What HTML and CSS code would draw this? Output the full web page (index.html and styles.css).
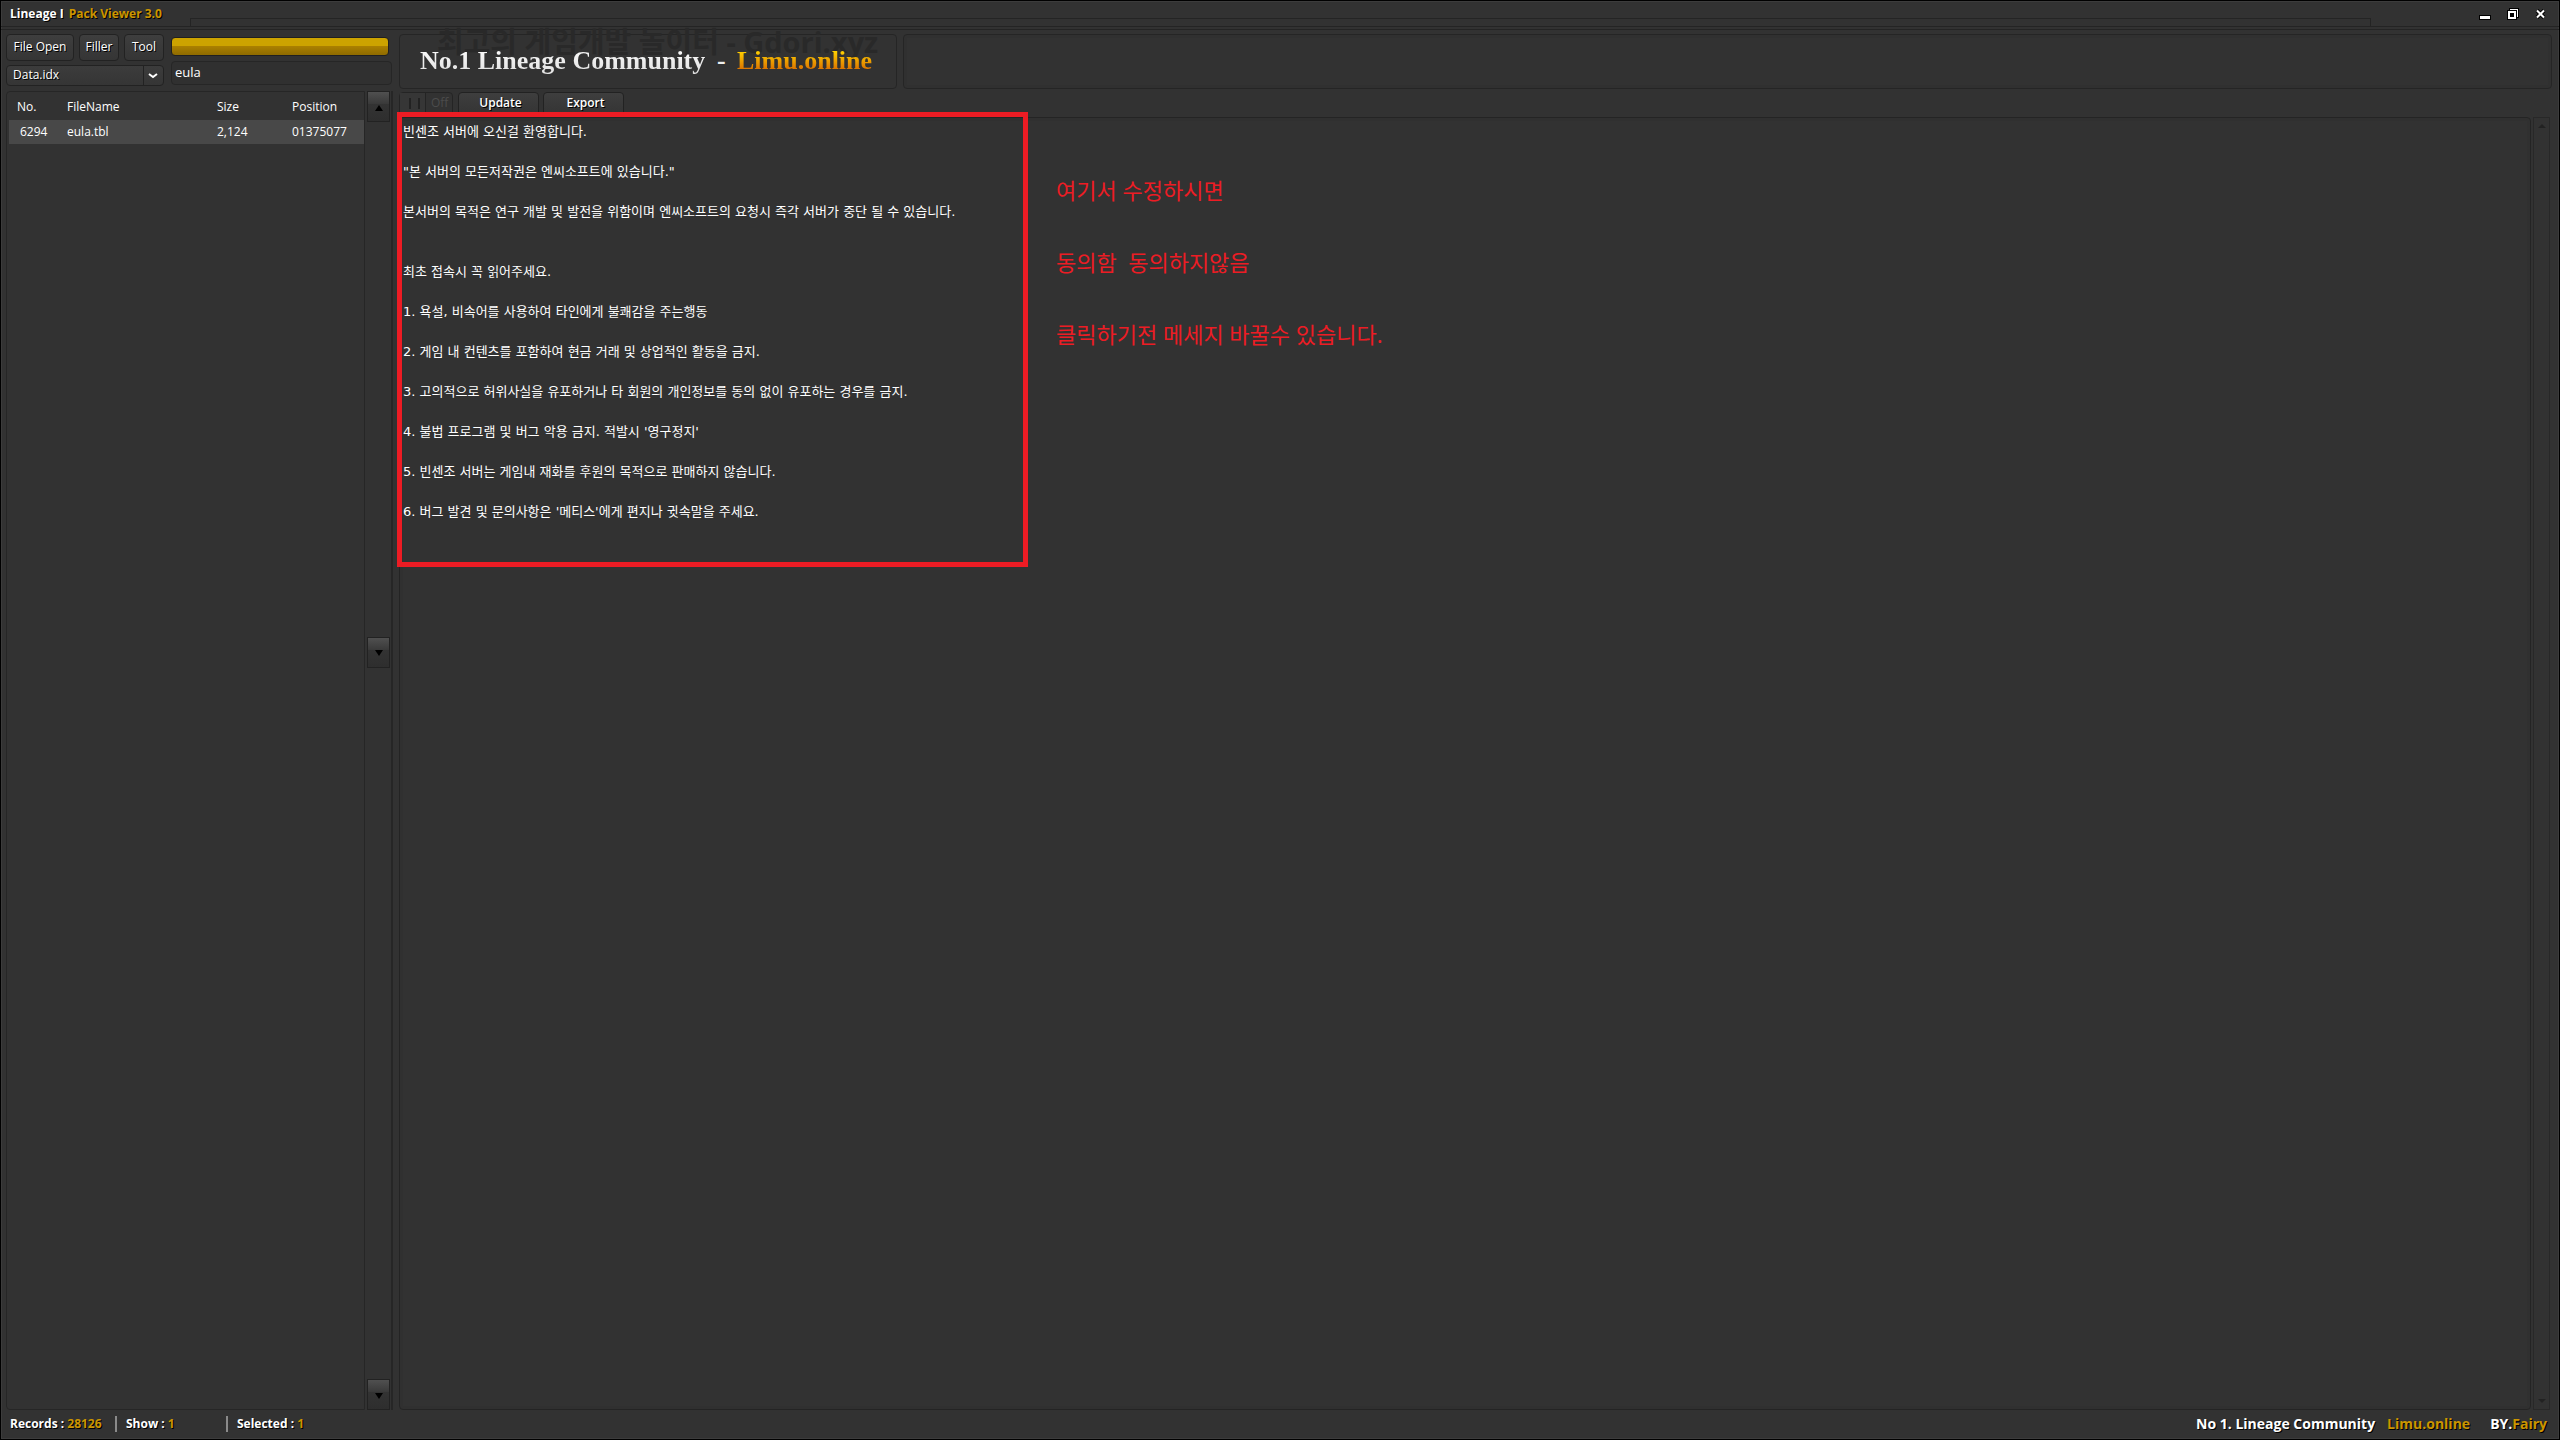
FILE: index.html
```html
<!DOCTYPE html>
<html lang="ko">
<head>
<meta charset="utf-8">
<title>Lineage I Pack Viewer 3.0</title>
<link rel="stylesheet" href="styles.css">
</head>
<body>
<div class="window">
  <header class="titlebar">
    <h1 class="title">Lineage I <span class="gold product">Pack Viewer 3.0</span></h1>
    <div class="title-groove"></div>
    <div class="window-controls">
      <button class="control" aria-label="Minimize"><svg width="12" height="12" viewBox="0 0 12 12"><path d="M0 7h12v5H0z" fill="#000"/><path d="M1 8h10v3H1z" fill="#fff"/></svg></button>
      <button class="control" aria-label="Restore"><svg width="12" height="12" viewBox="0 0 12 12"><path d="M2 0h10v10h-2v2H0V2h2z" fill="#000"/><path d="M3 1h8v8h-1V2H3z" fill="#fff"/><path d="M2 4h6v6H2z" fill="none" stroke="#fff" stroke-width="2"/></svg></button>
      <button class="control" aria-label="Close"><svg width="12" height="12" viewBox="0 0 12 12"><path d="M2 2.500l7 7M9 2.500l-7 7" stroke="#000" stroke-width="4"/><path d="M2 2.500l7 7M9 2.500l-7 7" stroke="#fff" stroke-width="2"/></svg></button>
    </div>
  </header>

  <main class="workspace">
    <aside class="sidebar">
      <div class="tools">
        <div class="tool-left">
          <div class="buttons">
            <button class="btn btn-open">File Open</button>
            <button class="btn">Filler</button>
            <button class="btn">Tool</button>
          </div>
          <div class="select-wrap">
            <select class="select" aria-label="Index file"><option>Data.idx</option></select>
            <svg class="chevron" width="10" height="6" viewBox="0 0 10 6"><path d="M1 1l4 3 4-3" fill="none" stroke="#fff" stroke-width="2"/></svg>
          </div>
        </div>
        <div class="tool-right">
          <div class="progress" role="progressbar" aria-label="Progress" aria-valuenow="100"></div>
          <input class="search" type="text" aria-label="Search" value="eula">
        </div>
      </div>
      <div class="list">
        <div class="list-body">
          <table class="files">
            <thead><tr><th class="c-no">No.</th><th class="c-name">FileName</th><th class="c-size">Size</th><th>Position</th></tr></thead>
            <tbody><tr><td class="num">6294</td><td>eula.tbl</td><td>2,124</td><td>01375077</td></tr></tbody>
          </table>
        </div>
        <div class="scroll">
          <button class="arrow" aria-label="Scroll up"><svg width="8" height="6" viewBox="0 0 8 6"><path d="M0 6l4-6 4 6z"/></svg></button>
          <div class="track-above"></div>
          <button class="arrow" aria-label="Scroll thumb"><svg width="8" height="6" viewBox="0 0 8 6"><path d="M0 0l4 6 4-6z"/></svg></button>
          <div class="track-below"></div>
          <button class="arrow" aria-label="Scroll down"><svg width="8" height="6" viewBox="0 0 8 6"><path d="M0 0l4 6 4-6z"/></svg></button>
        </div>
      </div>
    </aside>

    <section class="content">
      <div class="banners">
        <div class="banner">
          <div class="ghost">최고의 게임개발 놀이터 - Gdori.xyz</div>
          <span class="banner-main">No.1 Lineage Community</span>
          <span class="banner-dash">-</span>
          <span class="banner-link">Limu.online</span>
        </div>
        <div class="banner-empty"></div>
      </div>
      <div class="tabs">
        <label class="toggle"><input type="checkbox" class="toggle-input" disabled><span class="knob"></span><span class="off">Off</span></label>
        <button class="tab">Update</button>
        <button class="tab">Export</button>
      </div>
      <div class="editor-row">
        <div class="editor">
          <textarea class="text" aria-label="eula.tbl" spellcheck="false">빈센조 서버에 오신걸 환영합니다.

"본 서버의 모든저작권은 엔씨소프트에 있습니다."

본서버의 목적은 연구 개발 및 발전을 위함이며 엔씨소프트의 요청시 즉각 서버가 중단 될 수 있습니다.


최초 접속시 꼭 읽어주세요.

1. 욕설, 비속어를 사용하여 타인에게 불쾌감을 주는행동

2. 게임 내 컨텐츠를 포함하여 현금 거래 및 상업적인 활동을 금지.

3. 고의적으로 허위사실을 유포하거나 타 회원의 개인정보를 동의 없이 유포하는 경우를 금지.

4. 불법 프로그램 및 버그 악용 금지. 적발시 '영구정지'

5. 빈센조 서버는 게임내 재화를 후원의 목적으로 판매하지 않습니다.

6. 버그 발견 및 문의사항은 '메티스'에게 편지나 귓속말을 주세요.</textarea>
          <div class="highlight"></div>
          <div class="notes"><p>여기서 수정하시면</p><p>동의함&nbsp; 동의하지않음</p><p>클릭하기전 메세지 바꿀수 있습니다.</p></div>
        </div>
        <div class="rail">
          <svg width="8" height="4" viewBox="0 0 8 4"><path d="M0 4l4-4 4 4z"/></svg>
          <svg width="8" height="4" viewBox="0 0 8 4"><path d="M0 0l4 4 4-4z"/></svg>
        </div>
      </div>
    </section>
  </main>

  <footer class="status">
    <span class="stat stat-a">Records : <span class="gold">28126</span></span>
    <span class="stat stat-b">Show : <span class="gold">1</span></span>
    <span class="stat">Selected : <span class="gold">1</span></span>
    <div class="credits"><span>No 1. Lineage Community</span><a class="gold" href="#">Limu.online</a><span class="by">BY.<span class="gold">Fairy</span></span></div>
  </footer>
</div>
</body>
</html>
```
FILE: styles.css
```css
* { box-sizing: border-box; }

body {
  margin: 0;
  background: #323232;
  color: #fff;
  font: 12px/16px "Open Sans", "Noto Sans CJK KR", sans-serif;
}

button, input, select, textarea { font: inherit; color: inherit; margin: 0; }

.window {
  display: flex;
  flex-direction: column;
  min-height: 100vh;
  border: 1px solid #000;
  box-shadow: inset 0 0 0 1px #3c3c3c;
}

.gold { color: #cb9500; text-decoration: none; }

.titlebar {
  display: flex;
  height: 29px;
  padding-left: 9px;
  border-bottom: 4px double #242424;
}

.title {
  margin: 0;
  width: 180px;
  padding-top: 5px;
  font-size: 12px;
  line-height: 16px;
  text-shadow: 1px 1px 0 #000;
}
.product { margin-left: 2px; }

.title-groove {
  flex: 1;
  margin-top: 17px;
  border: solid #242424;
  border-width: 1px 1px 0;
}

.window-controls { display: flex; gap: 16px; padding: 7px 12px 0 108px; }
.control { width: 12px; height: 12px; padding: 0; border: 0; background: none; }
.control svg { display: block; }

.workspace { flex: 1; display: flex; padding: 4px 7px 0 5px; }

.sidebar { display: flex; flex-direction: column; width: 387px; margin-right: 6px; }

.tools { display: flex; gap: 7px; height: 51px; }
.tool-left { width: 158px; }
.buttons { display: flex; gap: 5px; margin-bottom: 4px; }

.btn {
  width: 40px;
  height: 27px;
  padding: 0 0 2px;
  border: 1px solid #222;
  border-radius: 4px;
  background: linear-gradient(#3e3e3e, #353535);
  text-shadow: 1px 1px 0 #000;
}
.btn-open { width: 68px; }

.select-wrap { display: grid; align-items: center; }
.select {
  grid-area: 1 / 1;
  width: 158px;
  height: 21px;
  padding: 0 6px 1px;
  appearance: none;
  border: 1px solid #222;
  border-radius: 4px;
  background: linear-gradient(90deg, transparent 136px, #222 136px, #222 137px, transparent 137px), linear-gradient(#3c3c3c, #353535);
  text-shadow: 1px 1px 0 #000;
}
.chevron { grid-area: 1 / 1; justify-self: end; margin-right: 6px; pointer-events: none; }

.tool-right { flex: 1; display: flex; flex-direction: column; gap: 5px; padding-top: 3px; }
.progress {
  width: 218px;
  height: 19px;
  border: 1px solid #202020;
  border-radius: 4px;
  background: linear-gradient(#cca300 0 50%, #a97f00 50%, #8f6b00);
}
.search {
  width: 221px;
  height: 25px;
  padding: 0 3px 2px;
  border: 1px solid #262626;
  border-radius: 4px;
  background: #303030;
  font-size: 13px;
}

.list { flex: 1; display: flex; margin-top: 6px; border-right: 2px solid #262626; }
.list-body {
  flex: 1;
  padding: 1px 0 0 2px;
  border: 1px solid #262626;
  border-radius: 4px 0 0 4px;
}
.files { width: 100%; border-collapse: collapse; table-layout: fixed; }
.files th { height: 27px; padding: 1px 0 0; font-weight: 400; text-align: left; }
.files th.c-no { padding-left: 8px; }
.files td { height: 24px; padding: 0; background: #484848; }
.files td.num { padding-left: 11px; }
.c-no { width: 58px; }
.c-name { width: 150px; }
.c-size { width: 75px; }

.scroll { display: flex; flex-direction: column; width: 26px; padding: 0 1px 0 2px; }
.track-above { flex: 42; }
.track-below { flex: 58; }
.arrow {
  width: 23px;
  height: 31px;
  padding: 0;
  border: 1px solid #222;
  background: linear-gradient(#505050, #3a3a3a 40%, #333 40%, #2e2e2e);
}

.content { flex: 1; display: flex; flex-direction: column; min-width: 0; }

.banners { display: flex; gap: 6px; height: 55px; }
.banner, .banner-empty { border: 1px solid #252525; border-radius: 4px; }
.banner {
  position: relative;
  display: flex;
  align-items: center;
  width: 498px;
  padding: 0 20px 2px;
  font: 700 26px/32px "Liberation Serif", serif;
  white-space: nowrap;
}
.banner-empty { flex: 1; box-shadow: inset 0 0 0 3px #303030; }
.ghost {
  position: absolute;
  left: 37px;
  top: -9px;
  color: #292929;
  font: 700 29px/32px "Open Sans", "Noto Sans CJK KR", sans-serif;
}
.banner-main, .banner-link { position: relative; color: transparent; background-clip: text; }
.banner-main { width: 297px; background-image: linear-gradient(#fff, #ddd); }
.banner-dash { position: relative; width: 20px; color: #eee; }
.banner-link { background-image: linear-gradient(#ffd000 20%, #d96d00 80%); }

.tabs { display: flex; gap: 4px; padding-top: 3px; }
.toggle {
  display: flex;
  width: 54px;
  height: 24px;
  margin-right: 1px;
  border: 1px solid #242424;
  border-radius: 4px 4px 0 0;
  color: #4c4c4c;
}
.toggle-input { position: absolute; opacity: 0; }
.knob { width: 26px; padding: 5px 9px; border-right: 1px solid #242424; background: #363636; }
.knob::before { content: ""; display: block; width: 7px; height: 11px; border: solid #222; border-width: 0 2px; }
.off { padding: 2px 0 0 5px; }
.tab {
  width: 81px;
  height: 24px;
  padding: 0 0 2px 4px;
  border: 1px solid #222;
  border-radius: 4px 4px 0 0;
  background: linear-gradient(#3e3e3e, #343434);
  font-weight: 600;
  text-shadow: 1px 1px 0 #000;
}

.editor-row { flex: 1; display: flex; gap: 2px; padding: 1px 2px 0 0; }
.editor {
  position: relative;
  flex: 1;
  display: flex;
  border: 1px solid #242424;
  border-radius: 4px;
  box-shadow: inset 0 0 0 3px #303030;
}
.text {
  flex: 1;
  padding: 4px 3px;
  border: 0;
  outline: 0;
  resize: none;
  background: none;
  font: 13px/20px "DejaVu Sans", "Noto Sans CJK KR", sans-serif;
}
.highlight {
  position: absolute;
  left: -3px;
  top: -6px;
  width: 631px;
  height: 455px;
  border: 5px solid #ed1c24;
  pointer-events: none;
}
.notes {
  position: absolute;
  left: 656px;
  top: 36px;
  color: #ed1c24;
  font: 400 22px/72px "Noto Sans", "Noto Sans CJK KR", sans-serif;
  pointer-events: none;
}
.notes p { margin: 0; }

.rail {
  display: flex;
  flex-direction: column;
  justify-content: space-between;
  align-items: center;
  width: 17px;
  padding: 6px 0;
  border: 1px solid #282828;
  fill: #222;
}

.status {
  display: flex;
  height: 29px;
  padding: 6px 12px 0 9px;
  font-weight: 700;
  text-shadow: 1px 1px 0 #000;
}
.stat-a, .stat-b { border-right: 2px solid #8a8a8a; height: 16px; margin-right: 9px; }
.stat-a { width: 107px; }
.stat-b { width: 102px; }
.credits { display: flex; gap: 12px; margin-left: auto; font-size: 14px; }
.by { margin-left: 8px; }
```
